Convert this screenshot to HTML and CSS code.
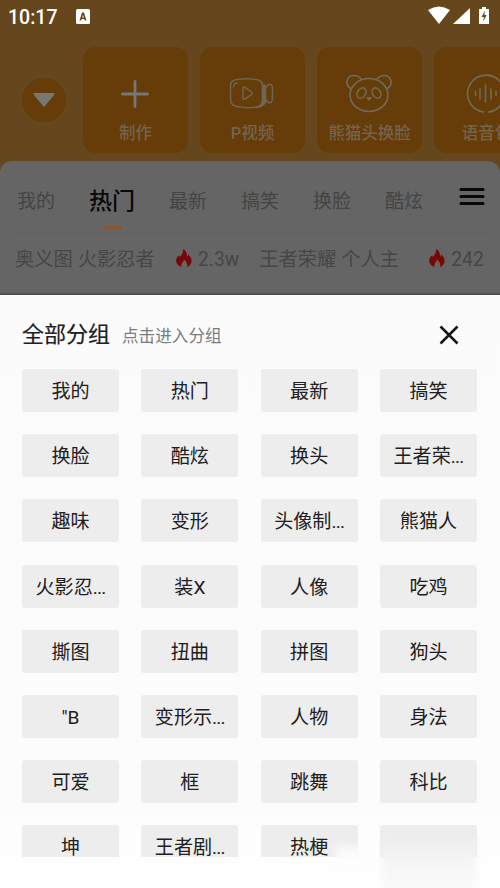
FILE: index.html
```html
<!DOCTYPE html>
<html lang="zh-CN">
<head>
<meta charset="utf-8">
<title>全部分组</title>
<link rel="stylesheet" href="styles.css">
</head>
<body>
<div class="screen">
  <div class="backdrop">
    <div class="status">
      <span class="time">10:17</span>
      <svg class="badge" viewBox="0 0 14 15"><rect width="14" height="15" rx="1.5" fill="#fff"/><path d="M3.5 11.5 6 3.5h2l2.5 8H8.800L8.300 10H5.700l-.5 1.500zM6.200 8.400h1.600L7 5.800z" fill="#66461d"/></svg>
      <svg class="signals" viewBox="0 0 64 20"><path d="M0 4Q11-3 22 4L11 18zM42 2v16H25zM54 1h4v2h3v15H51V3h3z" fill="#fff"/><path d="M57 4.500 53.500 11H56l-.8 4.500L58.700 9H56.300z" fill="#66461d"/></svg>
    </div>
    <div class="tools">
      <div class="toggle"><svg viewBox="0 0 24 16"><path d="M2 1h20q1 1 0 2L13 14q-1 1-2 0L2 3Q1 2 2 1z" fill="#777"/></svg></div>
      <div class="tool"><svg class="plus" viewBox="0 0 48 44"><path d="M24 10.500v25M11.500 23h25"/></svg><span>制作</span></div>
      <div class="tool"><svg class="video" viewBox="0 0 48 44"><path d="M9 8.500Q18 7 28 8.500Q34.500 9 34.500 15v14q0 6-6.500 7Q19 37.500 9 35.500Q2.500 34.500 2.500 28V15Q2.500 9 9 8.500zM5.500 16q0-4 4-4M36.500 18l4-4.500q4-1.500 4 4.500v8q0 7-4 5.500l-4-4.500"/><path d="M35.500 14v14q0 7-8 8.500 7-.5 10-5V15z" fill="#6d6a5c"/><path d="M15 17.500q0-2 2-1l6.500 4.500q1.500 1 0 2.500L17 28q-2 1-2-1z"/></svg><span>P视频</span></div>
      <div class="tool"><svg viewBox="0 0 48 44"><path d="M5.500 17.500C-1 13 2 4.500 9 4.500q5 0 7 3.500M32 8q3-3.500 7-3.500c7 0 10 8.500 3.500 13"/><ellipse cx="24" cy="24" rx="19" ry="16.500"/><ellipse cx="16.500" cy="22" rx="4" ry="5.500" transform="rotate(32 16.500 22)"/><ellipse cx="31.500" cy="22" rx="4" ry="5.500" transform="rotate(-32 31.500 22)"/><path d="M22.500 27h3L24 28.500z"/></svg><span>熊猫头换脸</span></div>
      <div class="tool"><svg viewBox="0 0 48 44"><path d="M21.500 41a18.500 18.500 0 1 1 5 0M13.500 20.500v4M18 18v10M23.500 14v17M29 18v10M34 20.500v4"/></svg><span>语音包</span></div>
    </div>
    <div class="feed">
      <div class="tabs">
        <span>我的</span><span class="active">热门</span><span>最新</span><span>搞笑</span><span>换脸</span><span>酷炫</span>
        <svg class="menu" viewBox="0 0 26 20"><path d="M2 2.500h22M2 9.500h22M2 16.500h22" stroke="#080808" stroke-width="3.200" stroke-linecap="round"/></svg>
      </div>
      <div class="topics">
        <span class="topic first">奥义图 火影忍者</span>
        <svg class="fire" viewBox="0 0 16 18"><path d="M7 0c4 2 4 5 4 8q1-1 1-2.500c3 2.500 4 5 3.500 7-.5 3-2 4.500-4.500 5.500 1-3-.5-5-3-7.500-.5 3-3.500 4-2.500 7.500C-2 15-.5 9 3 6.500Q3.500 7 4 8C6 5 7.500 3.500 7 0z" fill="#790707"/></svg>
        <span class="count">2.3w</span>
        <span class="topic second">王者荣耀 个人主</span>
        <svg class="fire" viewBox="0 0 16 18"><path d="M7 0c4 2 4 5 4 8q1-1 1-2.500c3 2.500 4 5 3.500 7-.5 3-2 4.500-4.500 5.500 1-3-.5-5-3-7.500-.5 3-3.500 4-2.500 7.500C-2 15-.5 9 3 6.500Q3.500 7 4 8C6 5 7.500 3.500 7 0z" fill="#790707"/></svg>
        <span class="count">242</span>
      </div>
    </div>
  </div>
  <div class="sheet">
    <div class="heading"><h1>全部分组</h1><span>点击进入分组</span><svg viewBox="0 0 20 20"><path d="m1.500 1.500 17 17m0-17-17 17" stroke="#161616" stroke-width="2.500"/></svg></div>
    <div class="groups">
      <div>我的</div><div>热门</div><div>最新</div><div>搞笑</div>
      <div>换脸</div><div>酷炫</div><div>换头</div><div>王者荣<i>...</i></div>
      <div>趣味</div><div>变形</div><div>头像制<i>...</i></div><div>熊猫人</div>
      <div>火影忍<i>...</i></div><div>装X</div><div>人像</div><div>吃鸡</div>
      <div>撕图</div><div>扭曲</div><div>拼图</div><div>狗头</div>
      <div>"B</div><div>变形示<i>...</i></div><div>人物</div><div>身法</div>
      <div>可爱</div><div>框</div><div>跳舞</div><div>科比</div>
      <div>坤</div><div>王者剧<i>...</i></div><div>热梗</div><div></div>
    </div>
    <div class="corner"></div>
    <div class="haze"></div>
  </div>
</div>
</body>
</html>
```
FILE: styles.css
```css
* { box-sizing: border-box; }
body { margin: 0; font-family: Roboto, "Noto Sans CJK SC", sans-serif; }
.screen { width: 500px; height: 888px; overflow: hidden; background: #fcfcfc; }
.backdrop { height: 295px; background: #66461d; overflow: hidden; display: flex; flex-direction: column; border-bottom: 2px solid #505050; }
.status { height: 47px; flex: none; display: flex; align-items: flex-start; padding: 7px 9px 0 8px; color: #fff; }
.time { font-size: 19.5px; font-weight: 500; line-height: 22px; width: 50px; white-space: nowrap; }
.badge { width: 14px; height: 15px; margin: 2px 0 0 18px; }
.signals { width: 64px; height: 20px; margin: -1px -1px 0 auto; }
.tools { display: flex; height: 114px; flex: none; padding-left: 22px; gap: 12px; }
.toggle { width: 44px; height: 44px; flex: none; border-radius: 50%; background: #663c08; margin: 31px 5px 0 0; display: flex; align-items: center; justify-content: center; }
.toggle svg { width: 24px; height: 16px; }
.tool { width: 105px; height: 106px; flex: none; border-radius: 13px; background: #663c08; display: flex; flex-direction: column; align-items: center; padding-top: 24px; color: #75644d; font-size: 16.5px; font-weight: 500; line-height: 24px; white-space: nowrap; }
.tool svg { width: 48px; height: 44px; margin-bottom: 7px; margin-left: -1px; fill: none; stroke: #726b5a; stroke-width: 1.6; stroke-linecap: round; }
.tool .plus { stroke: #777; stroke-width: 2.8; }
.tool .video { stroke: #6d6655; stroke-width: 1.5; }
.feed { flex: 1; border-radius: 12px 12px 0 0; background: #656565; }
.tabs { height: 72px; display: flex; align-items: center; gap: 34px; padding: 9px 15px 0 17px; color: #444; font-size: 19px; line-height: 28px; white-space: nowrap; }
.tabs .active { font-size: 23px; font-weight: 500; color: #080808; position: relative; }
.tabs .active::after { content: ""; position: absolute; left: 14px; bottom: -13px; width: 19px; height: 3px; background: #88552c; }
.menu { width: 26px; height: 20px; margin: -9px 0 0 auto; flex: none; }
.topics { height: 50px; margin: 0 12px; border-top: 1px solid #606060; padding: 2px 2px 0 3px; display: flex; align-items: center; color: #464646; font-size: 19.3px; line-height: 28px; white-space: nowrap; }
.fire { width: 16px; height: 18px; margin-right: 6px; margin-top: -3px; flex: none; }
.first { width: 161px; flex: none; }
.count { flex: none; }
.second { width: 151px; flex: none; margin-left: 20px; margin-right: 19px; }
.sheet { height: 593px; background: linear-gradient(#fbfbfb, #fcfcfc 85%, #fefefe 95%); position: relative; }
.heading { height: 74px; padding: 4px 41px 0 22px; display: flex; align-items: center; }
.heading h1 { margin: 2px 12px 0 0; font-size: 22px; font-weight: 400; -webkit-text-stroke: .2px #202020; color: #202020; line-height: 32px; }
.heading span { color: #7c7c7c; font-size: 16.6px; line-height: 24px; margin-top: 6px; }
.heading svg { width: 20px; height: 20px; margin-left: auto; margin-top: 1px; }
.groups { height: 488px; overflow: hidden; padding: 0 23px 0 22px; display: grid; grid-template-columns: repeat(4, 97px); justify-content: space-between; grid-auto-rows: 43px; row-gap: 22.2px; }
.groups div { display: flex; align-items: center; justify-content: center; border-radius: 3px; background: #ededed; color: #202020; font-size: 19.1px; line-height: 28px; padding-top: 3px; white-space: nowrap; }
.groups i { font-style: normal; letter-spacing: -.8px; }
.corner { position: absolute; left: 335px; bottom: 24px; width: 34px; height: 17px; background: #fcfcfc; filter: blur(5px); }
.haze { position: absolute; left: 382px; bottom: -10px; width: 94px; height: 62px; background: linear-gradient(#ededed, #f4f4f4 35%, #fafafa 80%); filter: blur(3px); }
```
